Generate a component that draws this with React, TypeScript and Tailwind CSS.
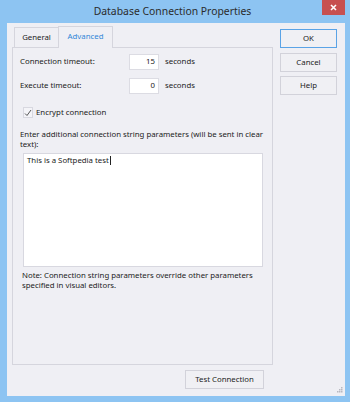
import React from "react";

const font = { fontFamily: '"Noto Sans", "Liberation Sans", Arial, sans-serif' };

function Btn({ label, primary, className = "" }: { label: string; primary?: boolean; className?: string }) {
  return (
    <div
      className={
        "flex h-[19px] items-center justify-center border bg-[#f0f0f4] text-[7.8px] text-[#222] " +
        (primary ? "border-[#5aa3e6] " : "border-[#d2d2da] ") +
        className
      }
    >
      {label}
    </div>
  );
}

function NumField({ value }: { value: string }) {
  return (
    <div className="flex h-[16px] w-[30px] items-center justify-end border border-[#dcdce3] bg-white pr-[3px] text-[7.8px] text-[#222]">
      {value}
    </div>
  );
}

export default function App() {
  return (
    <div className="flex h-[402px] w-[350px] flex-col bg-[#8dc4f2] pb-[6px] pl-[7px] pr-[5px]" style={font}>
      {/* title bar */}
      <div className="relative flex h-[23px] items-center justify-center">
        <span className="-ml-[7px] text-[10.4px] text-[#2b2b2b]">Database Connection Properties</span>
        <div className="absolute right-0 top-0 flex h-[15px] w-[23px] items-center justify-center bg-[#c75050]">
          <svg width="7" height="7" viewBox="0 0 7 7">
            <path d="M1 1 L6 6 M6 1 L1 6" stroke="#fff" strokeWidth="1.6" />
          </svg>
        </div>
      </div>

      {/* client area */}
      <div className="relative flex flex-1 bg-[#efeff4] pl-[5px] pt-[3px]">
        <div className="flex w-[261px] flex-col">
          {/* tabs */}
          <div className="flex h-[21px] items-end pl-[2px]">
            <div className="flex h-[20px] w-[45px] items-center justify-center border border-b-0 border-[#d5d5dd] text-[7.8px] text-[#222]">
              General
            </div>
            <div className="relative z-10 -mb-px -ml-px flex h-[22px] w-[55px] items-center justify-center border border-b-0 border-[#d5d5dd] bg-[#efeff4] pb-px text-[7.8px] text-[#2f86d8]">
              Advanced
            </div>
          </div>

          {/* panel */}
          <div className="flex h-[318px] flex-col border border-[#d5d5dd] text-[7.8px] leading-[9.5px] text-[#222]">
            <div className="mt-[6px] flex items-center">
              <span className="ml-[7px] w-[109px]">Connection timeout:</span>
              <NumField value="15" />
              <span className="ml-[6px]">seconds</span>
            </div>
            <div className="mt-[8px] flex items-center">
              <span className="ml-[7px] w-[109px]">Execute timeout:</span>
              <NumField value="0" />
              <span className="ml-[6px]">seconds</span>
            </div>
            <div className="ml-[10px] mt-[13px] flex items-center">
              <div className="flex h-[11px] w-[10px] items-center justify-center border border-[#d8d8e0] bg-[#f4f4f8]">
                <svg width="8" height="8" viewBox="0 0 8 8">
                  <path d="M1 4.5 L3 6.5 L7 1" stroke="#444" strokeWidth="0.9" fill="none" />
                </svg>
              </div>
              <span className="ml-[3px]">Encrypt connection</span>
            </div>
            <div className="ml-[7px] mt-[12px]">
              Enter additional connection string parameters (will be sent in clear text):
            </div>
            <div className="ml-[10px] mt-[4px] h-[114px] w-[240px] border border-[#d8d8e0] bg-white px-[3px] pt-[2px]">
              This is a Softpedia test<span className="ml-px inline-block h-[9px] w-px bg-[#222] align-middle" />
            </div>
            <div className="ml-[9px] mt-[4px] pr-[10px]">
              Note: Connection string parameters override other parameters specified in visual editors.
            </div>
          </div>

          <div className="mt-[5px] flex justify-end pr-[9px]">
            <Btn label="Test Connection" className="w-[79px]" />
          </div>
        </div>

        <div className="ml-[7px] mt-[3px] flex w-[57px] flex-col gap-[5px]">
          <Btn label="OK" primary />
          <Btn label="Cancel" />
          <Btn label="Help" className="-mt-px" />
        </div>

        {/* resize grip */}
        <svg className="absolute bottom-[3px] right-[2px]" width="6" height="6" viewBox="0 0 6 6">
          <rect x="4" y="0" width="1.5" height="1.5" fill="#b8b8c0" />
          <rect x="2" y="2" width="1.5" height="1.5" fill="#b8b8c0" />
          <rect x="4" y="2" width="1.5" height="1.5" fill="#b8b8c0" />
          <rect x="0" y="4" width="1.5" height="1.5" fill="#b8b8c0" />
          <rect x="2" y="4" width="1.5" height="1.5" fill="#b8b8c0" />
          <rect x="4" y="4" width="1.5" height="1.5" fill="#b8b8c0" />
        </svg>
      </div>
    </div>
  );
}
